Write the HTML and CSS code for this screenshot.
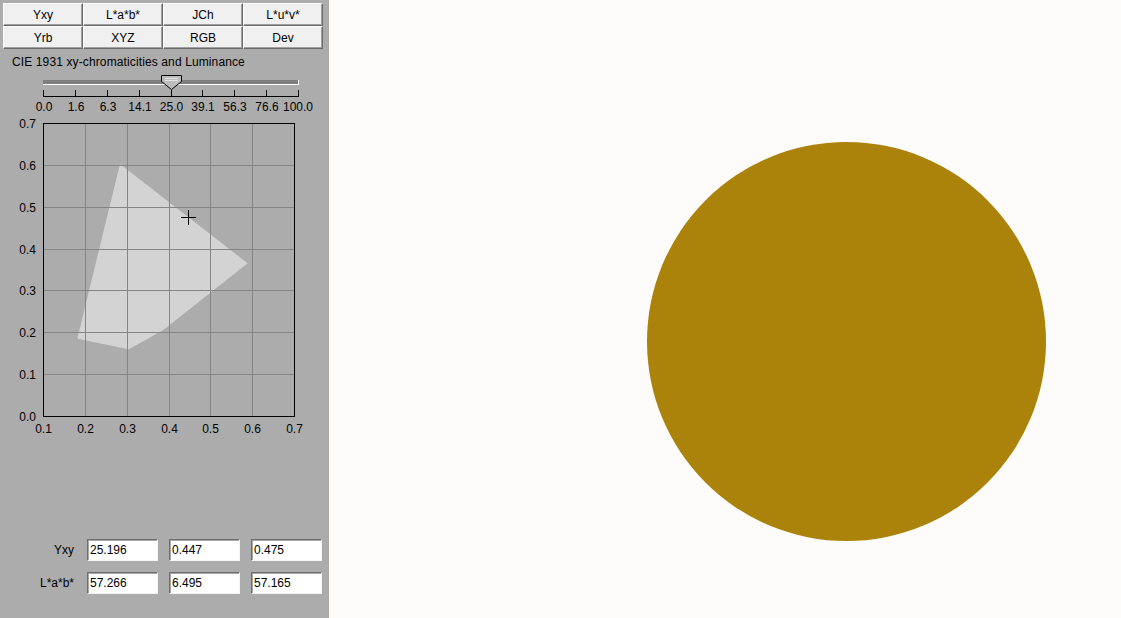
FILE: index.html
```html
<!DOCTYPE html>
<html>
<head>
<meta charset="utf-8">
<link rel="stylesheet" href="styles.css">
</head>
<body>
<div class="app">
  <div class="panel">
    <div class="tabs">
      <button class="tab">Yxy</button>
      <button class="tab">L*a*b*</button>
      <button class="tab">JCh</button>
      <button class="tab">L*u*v*</button>
      <button class="tab">Yrb</button>
      <button class="tab">XYZ</button>
      <button class="tab">RGB</button>
      <button class="tab">Dev</button>
    </div>
    <div class="title">CIE 1931 xy-chromaticities and Luminance</div>
    <svg class="slider" width="329" height="42" viewBox="0 72 329 42">
      <rect x="43" y="80" width="255" height="4" fill="#7f7f7f"/>
      <line x1="43" y1="84.5" x2="298.5" y2="84.5" stroke="#fff"/>
      <line x1="298.5" y1="80" x2="298.5" y2="85" stroke="#fff"/>
      <g stroke="#000" stroke-width="1">
        <line x1="43" y1="96.5" x2="299" y2="96.5"/>
        <line x1="43.5" y1="90" x2="43.5" y2="97"/>
        <line x1="75.5" y1="90" x2="75.5" y2="97"/>
        <line x1="107.5" y1="90" x2="107.5" y2="97"/>
        <line x1="139.5" y1="90" x2="139.5" y2="97"/>
        <line x1="171.5" y1="90" x2="171.5" y2="97"/>
        <line x1="202.5" y1="90" x2="202.5" y2="97"/>
        <line x1="234.5" y1="90" x2="234.5" y2="97"/>
        <line x1="266.5" y1="90" x2="266.5" y2="97"/>
        <line x1="298.5" y1="90" x2="298.5" y2="97"/>
      </g>
      <g class="svgtext" text-anchor="middle">
        <text x="44" y="111">0.0</text>
        <text x="76" y="111">1.6</text>
        <text x="108" y="111">6.3</text>
        <text x="140" y="111">14.1</text>
        <text x="171.5" y="111">25.0</text>
        <text x="203" y="111">39.1</text>
        <text x="235" y="111">56.3</text>
        <text x="267" y="111">76.6</text>
        <text x="298" y="111">100.0</text>
      </g>
      <polygon points="161.5,75.5 181.5,75.5 181.5,81.5 171.5,89.5 161.5,81.5" fill="#bdbdbd" stroke="#000"/>
      <line x1="165" y1="78.5" x2="178" y2="78.5" stroke="#e4e4e4"/>
      <line x1="165" y1="80.5" x2="178" y2="80.5" stroke="#e4e4e4"/>
    </svg>
    <svg class="chart" width="329" height="326" viewBox="0 114 329 326">
      <polygon points="77.3,338.7 120,164 247.7,263.3 163.3,330 129,349.3" fill="#d3d3d3"/>
      <g stroke="#858585" stroke-width="1">
        <line x1="85.5" y1="124" x2="85.5" y2="416"/>
        <line x1="127.5" y1="124" x2="127.5" y2="416"/>
        <line x1="169.5" y1="124" x2="169.5" y2="416"/>
        <line x1="210.5" y1="124" x2="210.5" y2="416"/>
        <line x1="252.5" y1="124" x2="252.5" y2="416"/>
        <line x1="44" y1="165.5" x2="294" y2="165.5"/>
        <line x1="44" y1="207.5" x2="294" y2="207.5"/>
        <line x1="44" y1="249.5" x2="294" y2="249.5"/>
        <line x1="44" y1="290.5" x2="294" y2="290.5"/>
        <line x1="44" y1="332.5" x2="294" y2="332.5"/>
        <line x1="44" y1="374.5" x2="294" y2="374.5"/>
      </g>
      <rect x="43.5" y="123.5" width="251" height="293" fill="none" stroke="#000"/>
      <g stroke="#000">
        <line x1="181" y1="217.5" x2="196" y2="217.5"/>
        <line x1="188.5" y1="210" x2="188.5" y2="225"/>
      </g>
      <g class="svgtext" text-anchor="end">
        <text x="36" y="128">0.7</text>
        <text x="36" y="170">0.6</text>
        <text x="36" y="212">0.5</text>
        <text x="36" y="254">0.4</text>
        <text x="36" y="295">0.3</text>
        <text x="36" y="337">0.2</text>
        <text x="36" y="379">0.1</text>
        <text x="36" y="421">0.0</text>
      </g>
      <g class="svgtext" text-anchor="middle">
        <text x="43.5" y="433">0.1</text>
        <text x="85.5" y="433">0.2</text>
        <text x="127.5" y="433">0.3</text>
        <text x="169.5" y="433">0.4</text>
        <text x="210.5" y="433">0.5</text>
        <text x="252.5" y="433">0.6</text>
        <text x="294.5" y="433">0.7</text>
      </g>
    </svg>
    <div class="fields">
      <label class="flabel">Yxy</label>
      <input class="field" type="text" value="25.196">
      <input class="field" type="text" value="0.447">
      <input class="field" type="text" value="0.475">
      <label class="flabel">L*a*b*</label>
      <input class="field" type="text" value="57.266">
      <input class="field" type="text" value="6.495">
      <input class="field" type="text" value="57.165">
    </div>
  </div>
  <div class="canvas">
    <div class="swatch"></div>
  </div>
</div>
</body>
</html>
```
FILE: styles.css
```css
html, body {
  margin: 0;
  padding: 0;
  width: 1121px;
  height: 618px;
  overflow: hidden;
  font-family: "Liberation Sans", Arial, sans-serif;
  font-size: 12px;
  color: #000;
}

.app {
  display: flex;
  width: 1121px;
  height: 618px;
}

.panel {
  width: 329px;
  height: 618px;
  background: #acacac;
  display: flex;
  flex-direction: column;
  flex: none;
}

.tabs {
  display: grid;
  grid-template-columns: repeat(4, 80px);
  grid-template-rows: repeat(2, 23px);
  padding: 3px 0 0 3px;
}

.tab {
  margin: 0;
  padding: 0;
  font-family: "Liberation Sans", Arial, sans-serif;
  font-size: 12px;
  line-height: 14px;
  color: #000;
  background: #f0f0f0;
  border: 1px solid;
  border-color: #ffffff #6a6a6a #6a6a6a #ffffff;
  box-shadow: inset -1px -1px 0 #a0a0a0;
  text-align: center;
}

.title {
  padding: 6px 0 3px 12px;
  line-height: 14px;
  height: 14px;
  letter-spacing: 0.12px;
}

.slider, .chart {
  display: block;
}

.svgtext {
  font-family: "Liberation Sans", Arial, sans-serif;
  font-size: 12px;
  fill: #000;
}

.fields {
  margin-top: auto;
  padding-bottom: 24px;
  display: grid;
  grid-template-columns: 76px 71px 71px 71px;
  grid-template-rows: 22px 22px;
  column-gap: 11px;
  row-gap: 11px;
}

.flabel {
  text-align: right;
  padding-right: 2px;
  line-height: 22px;
}

.field {
  box-sizing: border-box;
  width: 71px;
  height: 22px;
  margin: 0;
  padding: 0 0 0 2px;
  font-family: "Liberation Sans", Arial, sans-serif;
  font-size: 12px;
  color: #000;
  background: #fff;
  border: 1px solid;
  border-color: #6e6e6e #f4f4f4 #f4f4f4 #6e6e6e;
  box-shadow: inset 1px 1px 0 #a8a8a8;
  outline: none;
}

.canvas {
  flex: 1;
  background: #fdfcfb;
  padding: 142px 0 0 318px;
}

.swatch {
  width: 399px;
  height: 399px;
  border-radius: 50%;
  background: #ab830b;
}
```
